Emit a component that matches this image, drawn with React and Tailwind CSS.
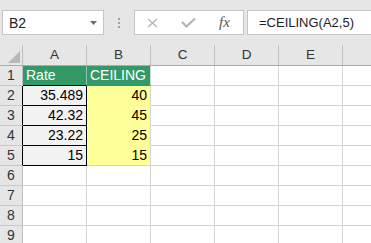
import React from "react";

const cols = ["A", "B", "C", "D", "E"];

const data = {
  1: ["Rate", "CEILING"],
  2: ["35.489", "40"],
  3: ["42.32", "45"],
  4: ["23.22", "25"],
  5: ["15", "15"],
};

function TopBar() {
  return (
    <div className="h-[45px] bg-[#e6e6e6] flex items-start pt-[10px]">
      {/* name box */}
      <div className="ml-[2px] w-[102px] h-[25px] bg-white border border-[#c6c6c6] flex items-center justify-between pl-[6px] pr-[6px]">
        <span className="text-[14px] text-[#222] leading-none">B2</span>
        <svg width="7" height="4" viewBox="0 0 7 4">
          <path d="M0 0 L7 0 L3.5 4 Z" fill="#6b6b6b" />
        </svg>
      </div>
      {/* dots */}
      <div className="ml-[14px] mt-[8px] flex flex-col gap-[2px]">
        <div className="w-[2px] h-[2px] bg-[#a0a0a0]" />
        <div className="w-[2px] h-[2px] bg-[#a0a0a0]" />
        <div className="w-[2px] h-[2px] bg-[#a0a0a0]" />
      </div>
      {/* cancel / enter / fx */}
      <div className="ml-[14px] w-[110px] h-[25px] bg-white border border-[#c6c6c6] flex items-center">
        <svg className="ml-[12px]" width="11" height="10" viewBox="0 0 11 10">
          <path d="M1 1 L10 9 M10 1 L1 9" stroke="#b4b4b4" strokeWidth="1.3" fill="none" />
        </svg>
        <svg className="ml-[23px]" width="15" height="11" viewBox="0 0 15 11">
          <path d="M1 5 L5.5 9.5 L14 1.5" stroke="#b4b4b4" strokeWidth="2.2" fill="none" />
        </svg>
        <span
          className="ml-[23px] text-[15px] italic text-[#555] leading-none"
          style={{ fontFamily: '"Liberation Serif", serif' }}
        >
          fx
        </span>
      </div>
      {/* formula */}
      <div className="ml-[3px] flex-1 h-[25px] bg-white border border-r-0 border-[#c6c6c6] flex items-center pl-[11px]">
        <span className="text-[13px] text-[#222] leading-none">=CEILING(A2,5)</span>
      </div>
    </div>
  );
}

function HeaderRow() {
  return (
    <div className="flex h-[21px] bg-[#e6e6e6] border-b border-[#ababab]">
      <div className="w-[23px] shrink-0 border-r border-[#bfbfbf] flex items-end justify-end pr-[2px] pb-[2px]">
        <svg width="12" height="12" viewBox="0 0 12 12">
          <path d="M12 0 L12 12 L0 12 Z" fill="#b9b9b9" />
        </svg>
      </div>
      {cols.map((c) => (
        <div
          key={c}
          className="w-[64px] shrink-0 border-r border-[#bfbfbf] flex items-center justify-center text-[13.5px] text-[#333]"
        >
          {c}
        </div>
      ))}
      <div className="flex-1" />
    </div>
  );
}

function Row({ n }) {
  const vals = data[n];
  const boxed = n >= 2 && n <= 5;
  return (
    <div className="flex h-[20px]">
      <div
        className={
          "w-[23px] shrink-0 bg-[#e6e6e6] border-b border-b-[#c8c8c8] border-r flex items-center justify-center text-[14px] text-[#333] " +
          (boxed ? "border-r-black" : "border-r-[#bfbfbf]")
        }
      >
        {n}
      </div>
      {cols.map((c, i) => {
        let cls =
          "w-[64px] shrink-0 border-r border-b flex items-center text-[14px] ";
        let v = vals && i < 2 ? vals[i] : "";
        if (n === 1 && i < 2) {
          cls +=
            "bg-[#339966] text-white pl-[3px] " +
            (i === 0
              ? "border-r-[#8fc4a8] border-b-black"
              : "border-r-[#d4d4d4] border-b-[#339966]");
        } else if (boxed && i === 0) {
          cls += "bg-[#f2f2f2] text-black justify-end pr-[3px] border-r-black border-b-black";
        } else if (boxed && i === 1) {
          cls +=
            "bg-[#ffff99] text-black justify-end pr-[3px] border-r-[#d4d4d4] " +
            (n === 5 ? "border-b-[#d4d4d4]" : "border-b-[#ffff99]");
        } else {
          cls += "bg-white border-[#d4d4d4]";
        }
        return (
          <div key={c} className={cls}>
            {v}
          </div>
        );
      })}
      <div className="flex-1 bg-white border-b border-[#d4d4d4]" />
    </div>
  );
}

export default function App() {
  return (
    <div
      className="w-[371px] h-[243px] overflow-hidden bg-white"
      style={{ fontFamily: '"Liberation Sans", Arial, sans-serif' }}
    >
      <TopBar />
      <HeaderRow />
      {[1, 2, 3, 4, 5, 6, 7, 8, 9].map((n) => (
        <Row key={n} n={n} />
      ))}
    </div>
  );
}
